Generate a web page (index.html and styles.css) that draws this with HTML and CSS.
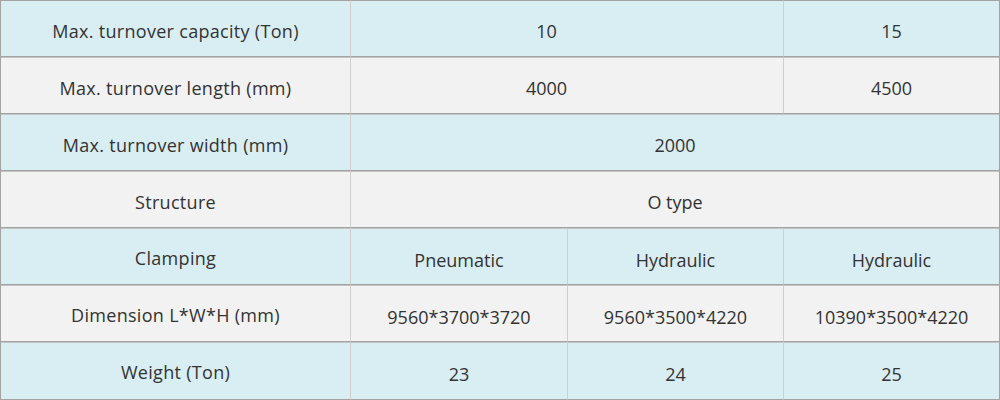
FILE: index.html
```html
<!DOCTYPE html>
<html>
<head>
<meta charset="utf-8">
<link rel="stylesheet" href="styles.css">
</head>
<body>
<table class="spec">
  <colgroup>
    <col class="c1"><col class="c2"><col class="c3"><col class="c4">
  </colgroup>
  <tr class="blue">
    <td>Max. turnover capacity (Ton)</td>
    <td colspan="2" class="off">10</td>
    <td>15</td>
  </tr>
  <tr class="gray">
    <td>Max. turnover length (mm)</td>
    <td colspan="2" class="off">4000</td>
    <td>4500</td>
  </tr>
  <tr class="blue">
    <td>Max. turnover width (mm)</td>
    <td colspan="3">2000</td>
  </tr>
  <tr class="gray">
    <td>Structure</td>
    <td colspan="3">O type</td>
  </tr>
  <tr class="blue low">
    <td>Clamping</td>
    <td>Pneumatic</td>
    <td>Hydraulic</td>
    <td>Hydraulic</td>
  </tr>
  <tr class="gray low">
    <td>Dimension L*W*H (mm)</td>
    <td>9560*3700*3720</td>
    <td>9560*3500*4220</td>
    <td>10390*3500*4220</td>
  </tr>
  <tr class="blue low last">
    <td>Weight (Ton)</td>
    <td>23</td>
    <td>24</td>
    <td>25</td>
  </tr>
</table>
</body>
</html>
```

FILE: styles.css
```css
html, body {
  margin: 0;
  padding: 0;
  background: #ffffff;
}

.spec {
  border-collapse: separate;
  border-spacing: 0;
  table-layout: fixed;
  width: 1000px;
  border-left: 1px solid #a3a3a3;
  border-right: 1px solid #a3a3a3;
  font-family: "Open Sans", "Liberation Sans", sans-serif;
  font-size: 18px;
  color: #333333;
}

.c1 { width: 349px; }
.c2 { width: 217px; }
.c3 { width: 216px; }
.c4 { width: 216px; }

.spec td {
  box-sizing: content-box;
  height: 51px;
  padding: 4px 0 0 0;
  text-align: center;
  vertical-align: middle;
  border-top: 1px solid #c4c4c4;
  border-bottom: 1px solid #a3a3a3;
  border-left: 1px solid #cfcfcf;
  white-space: nowrap;
  line-height: 24px;
}

.spec td:first-child {
  border-left: 0;
  letter-spacing: 0.3px;
}

.spec tr:first-child td {
  border-top-color: #a3a3a3;
}

.spec tr.blue td { background: #d9eef3; }
.spec tr.gray td { background: #f2f2f2; }

.spec td.off {
  padding-right: 41px;
}

.spec tr.low td {
  padding-top: 6px;
  height: 49px;
}

.spec tr.low td:first-child {
  padding-top: 2px;
  height: 53px;
}

.spec tr.last td {
  height: 50px;
}

.spec tr.last td:first-child {
  height: 54px;
}
```
